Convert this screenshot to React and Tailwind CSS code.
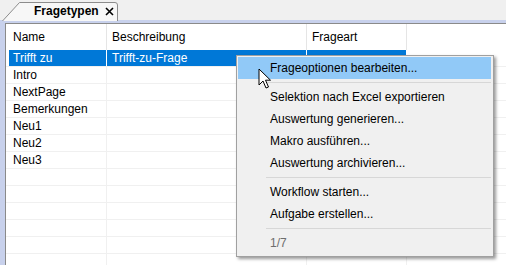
import React from "react";

const rows = [
  { name: "Trifft zu", desc: "Trifft-zu-Frage", selected: true },
  { name: "Intro" },
  { name: "NextPage" },
  { name: "Bemerkungen" },
  { name: "Neu1" },
  { name: "Neu2" },
  { name: "Neu3" },
  {},
  {},
  {},
  {},
  {},
  {},
];

const menu = [
  { label: "Frageoptionen bearbeiten...", active: true },
  { sep: true },
  { label: "Selektion nach Excel exportieren" },
  { label: "Auswertung generieren..." },
  { label: "Makro ausführen..." },
  { label: "Auswertung archivieren..." },
  { sep: true },
  { label: "Workflow starten..." },
  { label: "Aufgabe erstellen..." },
  { sep: true },
  { label: "1/7", muted: true },
];

const Tab = () => (
  <div className="relative ml-[2px] mt-[2px] w-[117px] h-[18px] flex items-center">
    <svg className="absolute inset-0" width="117" height="19" viewBox="0 0 117 19">
      <path d="M0.5 19 L17.5 0.5 L113 0.5 Q115.5 0.5 115.5 3 L115.5 19" fill="#f7f7f7" stroke="#8c8c8c" />
    </svg>
    <span className="relative ml-[32px] font-bold text-[12px] text-black">Fragetypen</span>
    <span className="relative ml-[6px] mt-[1px]">
      <svg width="9" height="9" viewBox="0 0 9 9">
        <path d="M1 1 L8 8 M8 1 L1 8" stroke="#000" strokeWidth="1.6" />
      </svg>
    </span>
  </div>
);

const Cursor = () => (
  <svg className="absolute left-[258px] top-[68px]" width="14" height="22" viewBox="0 0 14 22">
    <path
      d="M1 1 L1 17 L5 13 L8 20 L10.5 19 L7.5 12.2 L12.5 12.2 Z"
      fill="#fff"
      stroke="#000"
      strokeWidth="1"
      strokeLinejoin="round"
    />
  </svg>
);

const App = () => {
  return (
    <div
      className="relative w-[506px] h-[265px] overflow-hidden bg-[#f0f0f0] text-[12px] text-black"
      style={{ fontFamily: '"Liberation Sans", Arial, sans-serif' }}
    >
      <div className="h-[20px] flex">
        <Tab />
      </div>
      <div className="h-[245px] border-t-[3px] border-l-[5px] border-[#c8d1ec]">
        <div className="h-full border-t border-l border-[#8a8a8a] bg-white">
          {/* header */}
          <div className="flex h-[26px]">
            <div className="w-[101px] pl-[7px] border-r border-[#e5e5e5] flex items-center">Name</div>
            <div className="w-[200px] pl-[5px] border-r border-[#e5e5e5] flex items-center">Beschreibung</div>
            <div className="w-[100px] pl-[5px] border-r border-[#e5e5e5] flex items-center">Frageart</div>
            <div className="flex-1"></div>
          </div>
          {/* body */}
          {rows.map((r, i) => (
            <div key={i} className="flex h-[17px] border-b border-[#f0f0f0] leading-[16px]">
              <div
                className={`w-[101px] border-r pl-[3px] ${r.selected ? "border-white" : "border-[#f0f0f0]"}`}
              >
                <div className={`h-full pl-[4px] ${r.selected ? "bg-[#0078d7] text-white" : ""}`}>{r.name}</div>
              </div>
              <div
                className={`w-[200px] pl-[5px] border-r ${
                  r.selected ? "bg-[#0078d7] text-white border-white" : "border-[#f0f0f0]"
                }`}
              >
                {r.desc}
              </div>
              <div
                className={`w-[100px] border-r ${r.selected ? "bg-[#0078d7] border-white" : "border-[#f0f0f0]"}`}
              ></div>
              <div className="flex-1"></div>
            </div>
          ))}
        </div>
      </div>

      {/* context menu */}
      <div className="absolute left-[236px] top-[55px] w-[258px] bg-[#f0f0f0] border border-[#a0a0a0] pt-[1px] pb-[2px] pl-[1px] pr-[2px] shadow-[2px_2px_3px_rgba(0,0,0,0.4)]">
        {menu.map((m, i) =>
          m.sep ? (
            <div key={i} className="h-[7px] flex items-center pl-[28px]">
              <div className="h-px w-full bg-[#d7d7d7]"></div>
            </div>
          ) : (
            <div
              key={i}
              className={`h-[22px] pl-[32px] flex items-center ${m.active ? "bg-[#91c9f7]" : ""} ${
                m.muted ? "text-[#6d6d6d]" : ""
              }`}
            >
              {m.label}
            </div>
          )
        )}
      </div>
      <Cursor />
    </div>
  );
};

export default App;
